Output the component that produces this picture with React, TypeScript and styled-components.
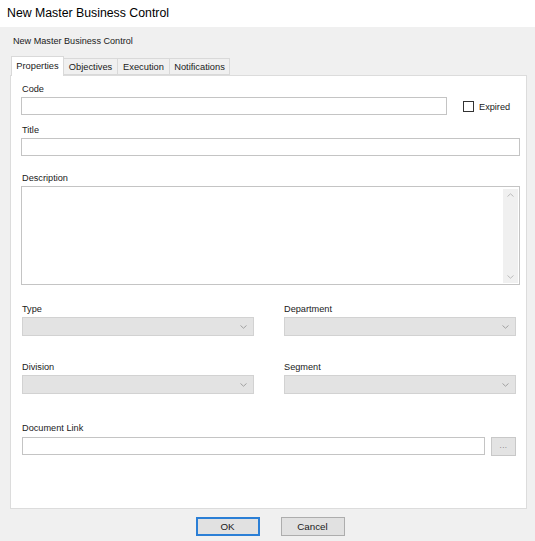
import React from "react";
import styled, { createGlobalStyle } from "styled-components";

const Global = createGlobalStyle`
  html, body { margin: 0; padding: 0; background: #f0f0f0; }
  body { font-family: "Liberation Sans", Arial, sans-serif; color: #000; }
  * { box-sizing: border-box; }
`;

const Dialog = styled.div`
  width: 535px;
  height: 541px;
  display: flex;
  flex-direction: column;
  background: #f0f0f0;
  overflow: hidden;
`;

const TitleBar = styled.div`
  height: 27px;
  background: #ffffff;
  display: flex;
  align-items: center;
  padding-left: 7px;
  padding-bottom: 1px;
  font-size: 12.3px;
  color: #000;
`;

const Body = styled.div`
  flex: 1;
  display: flex;
  flex-direction: column;
  padding: 0 8px 0 10px;
`;

const Header = styled.div`
  font-size: 9.1px;
  line-height: 11px;
  margin-top: 9px;
  padding-left: 3px;
  color: #1a1a1a;
`;

const TabStrip = styled.div`
  display: flex;
  align-items: flex-end;
  height: 19px;
  margin-top: 9px;
  padding-left: 1px;
  position: relative;
  z-index: 1;
`;

const Tab = styled.div<{ $active?: boolean; $w: number }>`
  width: ${(p) => p.$w}px;
  height: ${(p) => (p.$active ? 20 : 17)}px;
  margin-bottom: ${(p) => (p.$active ? -1 : 0)}px;
  display: flex;
  align-items: center;
  justify-content: center;
  font-size: 9.3px;
  color: #1a1a1a;
  background: ${(p) => (p.$active ? "#ffffff" : "#f0f0f0")};
  border: 1px solid #d9d9d9;
  border-bottom: ${(p) => (p.$active ? "none" : "1px solid #d9d9d9")};
  margin-left: ${(p) => (p.$active ? 0 : -1)}px;
  padding-bottom: ${(p) => (p.$active ? 2 : 0)}px;
`;

const Panel = styled.div`
  width: 517px;
  height: 434px;
  background: #ffffff;
  border: 1px solid #dcdcdc;
  padding: 0 0 0 10px;
  display: flex;
  flex-direction: column;
`;

const Label = styled.div<{ $top: number; $indent?: number }>`
  font-size: 9.2px;
  line-height: 11px;
  height: 11px;
  margin-top: ${(p) => p.$top}px;
  margin-bottom: 2px;
  margin-left: ${(p) => p.$indent ?? 1}px;
  color: #1a1a1a;
  white-space: nowrap;
`;

const Row = styled.div`
  display: flex;
  align-items: center;
`;

const TextBox = styled.div<{ $w: number; $h?: number; $indent?: number }>`
  width: ${(p) => p.$w}px;
  height: ${(p) => p.$h ?? 18}px;
  margin-left: ${(p) => p.$indent ?? 0}px;
  background: #ffffff;
  border: 1px solid #c4c4c4;
  flex: none;
`;

const CheckWrap = styled.label`
  display: flex;
  align-items: center;
  margin-left: 16px;
  gap: 5px;
  font-size: 9.2px;
  color: #1a1a1a;
  margin-top: 1px;
`;

const CheckBox = styled.span`
  width: 11px;
  height: 11px;
  border: 1px solid #333333;
  background: #fff;
  display: inline-block;
`;

const TextArea = styled.div`
  width: 499px;
  height: 99px;
  border: 1px solid #c4c4c4;
  background: #fff;
  display: flex;
  justify-content: flex-end;
  padding: 2px 1px 1px 0;
`;

const ScrollBar = styled.div`
  width: 15px;
  height: 100%;
  background: #f0f0f0;
  display: flex;
  flex-direction: column;
  justify-content: space-between;
  align-items: center;
  padding: 4px 0 4px;
`;

const Grid = styled.div`
  display: grid;
  grid-template-columns: 232px 232px;
  column-gap: 30px;
  margin-left: 1px;
`;

const FieldCol = styled.div`
  display: flex;
  flex-direction: column;
`;

const Combo = styled.div`
  width: 232px;
  height: 19px;
  background: #e3e3e3;
  border: 1px solid #d2d2d2;
  display: flex;
  align-items: center;
  justify-content: flex-end;
  padding-right: 6px;
`;

const SmallButton = styled.div`
  width: 25px;
  height: 19px;
  margin-left: 6px;
  margin-top: 1px;
  background: #e3e3e3;
  border: 1px solid #c8c8c8;
  display: flex;
  align-items: flex-end;
  justify-content: center;
  font-size: 8px;
  line-height: 8px;
  color: #777;
  padding-bottom: 5px;
  letter-spacing: 0.5px;
`;

const Footer = styled.div`
  display: flex;
  justify-content: center;
  gap: 21px;
  padding-left: 3px;
  margin-top: 8px;
`;

const Button = styled.div<{ $default?: boolean }>`
  width: 64px;
  height: 19px;
  background: #e1e1e1;
  border: ${(p) => (p.$default ? "2px solid #2b7fd6" : "1px solid #adadad")};
  display: flex;
  align-items: center;
  justify-content: center;
  font-size: 9.8px;
  color: #1a1a1a;
`;

const Chevron = ({ up, color = "#9a9a9a" }: { up?: boolean; color?: string }) => (
  <svg width="7" height="4" viewBox="0 0 7 4">
    <path
      d={up ? "M0.5 3.5 L3.5 0.8 L6.5 3.5" : "M0.5 0.5 L3.5 3.2 L6.5 0.5"}
      fill="none"
      stroke={color}
      strokeWidth="0.9"
    />
  </svg>
);

export default function App() {
  return (
    <>
      <Global />
      <Dialog>
        <TitleBar>New Master Business Control</TitleBar>
        <Body>
          <Header>New Master Business Control</Header>
          <TabStrip>
            <Tab $active $w={53}>Properties</Tab>
            <Tab $w={55}>Objectives</Tab>
            <Tab $w={53}>Execution</Tab>
            <Tab $w={61}>Notifications</Tab>
          </TabStrip>
          <Panel>
            <Label $top={8}>Code</Label>
            <Row>
              <TextBox $w={426} />
              <CheckWrap>
                <CheckBox />
                Expired
              </CheckWrap>
            </Row>
            <Label $top={10}>Title</Label>
            <TextBox $w={499} />
            <Label $top={17}>Description</Label>
            <TextArea>
              <ScrollBar>
                <Chevron up color="#b5b5b5" />
                <Chevron color="#b5b5b5" />
              </ScrollBar>
            </TextArea>
            <Grid>
              <FieldCol>
                <Label $top={19} $indent={0}>Type</Label>
                <Combo><Chevron /></Combo>
              </FieldCol>
              <FieldCol>
                <Label $top={19} $indent={0}>Department</Label>
                <Combo><Chevron /></Combo>
              </FieldCol>
              <FieldCol>
                <Label $top={26} $indent={0}>Division</Label>
                <Combo><Chevron /></Combo>
              </FieldCol>
              <FieldCol>
                <Label $top={26} $indent={0}>Segment</Label>
                <Combo><Chevron /></Combo>
              </FieldCol>
            </Grid>
            <Label $top={29}>Document Link</Label>
            <Row>
              <TextBox $w={463} $indent={1} />
              <SmallButton>...</SmallButton>
            </Row>
          </Panel>
          <Footer>
            <Button $default>OK</Button>
            <Button>Cancel</Button>
          </Footer>
        </Body>
      </Dialog>
    </>
  );
}
